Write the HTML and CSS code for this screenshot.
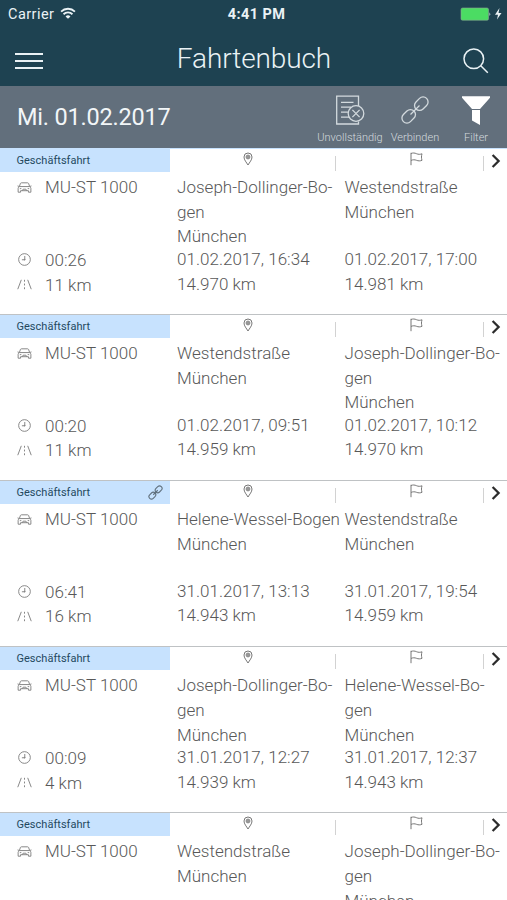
FILE: index.html
```
<!DOCTYPE html>
<html lang="de">
<head>
<meta charset="utf-8">
<title>Fahrtenbuch</title>
<link rel="stylesheet" href="styles.css">
</head>
<body>
<svg class="defs" aria-hidden="true">
  <symbol id="pin" viewBox="0 0 10 14"><path d="M5 13C3.500 10.400 1 8 1 5a4 4 0 0 1 8 0c0 3-2.500 5.400-4 8z"/><circle cx="5" cy="5" r="1.900"/><path d="M5 4v2M4 5h2"/></symbol>
  <symbol id="flag" viewBox="0 0 13 14"><path d="M1 .8v12.400M1 1.500c2-.8 3.700-.6 5.500.2s3.700.8 5.500.1c-.7 2.200-.7 4.300 0 6.500-1.800.8-3.700.7-5.500 0S3 7.600 1 8.400"/></symbol>
  <symbol id="car" viewBox="0 0 16 13"><path d="M2.500 5.500 3.600 2.300q.3-.8 1.100-.8h6.600q.8 0 1.100.8l1.100 3.200M.6 4.800l1.900.7h11l1.900-.7M2.500 5.500Q1.200 6.200 1.200 7.500v4h2.600V9.900h8.400v1.600h2.600v-4q0-1.300-1.300-2M3 7.700h1.600M11.400 7.700H13M5.600 9.900l.9-1.600h3l.9 1.600"/></symbol>
  <symbol id="clock" viewBox="0 0 14 14"><circle cx="7" cy="7" r="6.300"/><path d="M7.300 3.200v4.100H4.200"/><circle cx="7.200" cy="7.200" r=".5"/></symbol>
  <symbol id="road" viewBox="0 0 16 12"><path d="M4.600 1 .8 11M11.400 1l3.800 10M8 1v2M8 5v2M8 9v2"/></symbol>
  <symbol id="link" viewBox="0 0 30 30"><rect x="-7.500" y="-5" width="15" height="10" rx="5" transform="translate(21.300 8.700) rotate(-45)"/><rect x="-7.500" y="-5" width="15" height="10" rx="5" transform="translate(8.700 21.300) rotate(-45)"/><path d="M10.500 19.500l9-9"/></symbol>
  <symbol id="chevron" viewBox="0 0 10 14"><path d="M1.600 1 7.600 7l-6 6"/></symbol>
</svg>

<div class="screen">
  <header class="top">
    <div class="status">
      <div class="carrier">Carrier
        <svg class="wifi" viewBox="0 0 15 12"><path d="M1 4.200a9.300 9.300 0 0 1 13 0M3.300 6.700a6 6 0 0 1 8.400 0"/><path class="solid" d="M7.500 11 5.200 8.700a3.300 3.300 0 0 1 4.600 0z"/></svg>
      </div>
      <div class="time">4:41 PM</div>
      <div class="power">
        <svg viewBox="0 0 42 14"><rect class="battery" x="1" y="1" width="27.500" height="12.200" rx="1.500"/><path class="solid" d="M29.500 5.200q1.800 1.900 0 3.800zM39.500 1 35 7.700h3l-1 4.700 4.500-6.500h-3z"/></svg>
      </div>
    </div>
    <div class="nav">
      <svg class="menu" viewBox="0 0 30 18"><path d="M1 2h28M1 9h28M1 16h28"/></svg>
      <h1>Fahrtenbuch</h1>
      <svg class="search" viewBox="0 0 26 26"><circle cx="10.800" cy="10.800" r="9.800"/><path d="m17.800 17.800 7 7"/></svg>
    </div>
  </header>

  <section class="toolbar">
    <h2>Mi. 01.02.2017</h2>
    <div class="tool incomplete">
      <svg viewBox="0 0 30 30"><path d="M23.500 11V1.200H1.700V29h21.800v-2.500M6 7.300h12.500M6 12.200h10M6 17.200h7M6 22.200h8"/><circle cx="21" cy="18.500" r="7.800"/><path d="m17.400 14.900 7.200 7.200M24.600 14.900l-7.200 7.200"/></svg>
      <span>Unvollständig</span>
    </div>
    <div class="tool connect">
      <svg viewBox="0 0 30 30"><use href="#link"/></svg>
      <span>Verbinden</span>
    </div>
    <div class="tool filter">
      <svg viewBox="0 0 30 30"><path class="solid" d="M1 1.200h28v1.500L19 14H11L1 2.700zM11 15h8V30l-8-4.500z"/></svg>
      <span>Filter</span>
    </div>
  </section>

  <main class="trips">
    <article class="trip">
      <div class="kind">Geschäftsfahrt</div>
      <div class="head start"><svg class="pin"><use href="#pin"/></svg></div>
      <div class="head end"><svg class="flag"><use href="#flag"/></svg></div>
      <svg class="chevron"><use href="#chevron"/></svg>
      <div class="cell car"><div class="place"><svg><use href="#car"/></svg>MU-ST 1000</div><div class="fact"><svg><use href="#clock"/></svg>00:26</div><div class="fact"><svg><use href="#road"/></svg>11 km</div></div>
      <div class="cell"><div class="place">Joseph-Dollinger-Bo-<br>gen<br>München</div><div class="fact">01.02.2017, 16:34</div><div class="fact">14.970 km</div></div>
      <div class="cell"><div class="place">Westendstraße<br>München</div><div class="fact">01.02.2017, 17:00</div><div class="fact">14.981 km</div></div>
    </article>
    <article class="trip">
      <div class="kind">Geschäftsfahrt</div>
      <div class="head start"><svg class="pin"><use href="#pin"/></svg></div>
      <div class="head end"><svg class="flag"><use href="#flag"/></svg></div>
      <svg class="chevron"><use href="#chevron"/></svg>
      <div class="cell car"><div class="place"><svg><use href="#car"/></svg>MU-ST 1000</div><div class="fact"><svg><use href="#clock"/></svg>00:20</div><div class="fact"><svg><use href="#road"/></svg>11 km</div></div>
      <div class="cell"><div class="place">Westendstraße<br>München</div><div class="fact">01.02.2017, 09:51</div><div class="fact">14.959 km</div></div>
      <div class="cell"><div class="place">Joseph-Dollinger-Bo-<br>gen<br>München</div><div class="fact">01.02.2017, 10:12</div><div class="fact">14.970 km</div></div>
    </article>
    <article class="trip">
      <div class="kind">Geschäftsfahrt<svg><use href="#link"/></svg></div>
      <div class="head start"><svg class="pin"><use href="#pin"/></svg></div>
      <div class="head end"><svg class="flag"><use href="#flag"/></svg></div>
      <svg class="chevron"><use href="#chevron"/></svg>
      <div class="cell car"><div class="place"><svg><use href="#car"/></svg>MU-ST 1000</div><div class="fact"><svg><use href="#clock"/></svg>06:41</div><div class="fact"><svg><use href="#road"/></svg>16 km</div></div>
      <div class="cell"><div class="place">Helene-Wessel-Bogen<br>München</div><div class="fact">31.01.2017, 13:13</div><div class="fact">14.943 km</div></div>
      <div class="cell"><div class="place">Westendstraße<br>München</div><div class="fact">31.01.2017, 19:54</div><div class="fact">14.959 km</div></div>
    </article>
    <article class="trip">
      <div class="kind">Geschäftsfahrt</div>
      <div class="head start"><svg class="pin"><use href="#pin"/></svg></div>
      <div class="head end"><svg class="flag"><use href="#flag"/></svg></div>
      <svg class="chevron"><use href="#chevron"/></svg>
      <div class="cell car"><div class="place"><svg><use href="#car"/></svg>MU-ST 1000</div><div class="fact"><svg><use href="#clock"/></svg>00:09</div><div class="fact"><svg><use href="#road"/></svg>4 km</div></div>
      <div class="cell"><div class="place">Joseph-Dollinger-Bo-<br>gen<br>München</div><div class="fact">31.01.2017, 12:27</div><div class="fact">14.939 km</div></div>
      <div class="cell"><div class="place">Helene-Wessel-Bo-<br>gen<br>München</div><div class="fact">31.01.2017, 12:37</div><div class="fact">14.943 km</div></div>
    </article>
    <article class="trip">
      <div class="kind">Geschäftsfahrt</div>
      <div class="head start"><svg class="pin"><use href="#pin"/></svg></div>
      <div class="head end"><svg class="flag"><use href="#flag"/></svg></div>
      <svg class="chevron"><use href="#chevron"/></svg>
      <div class="cell car"><div class="place"><svg><use href="#car"/></svg>MU-ST 1000</div></div>
      <div class="cell"><div class="place">Westendstraße<br>München</div></div>
      <div class="cell"><div class="place">Joseph-Dollinger-Bo-<br>gen<br>München</div></div>
    </article>
  </main>
</div>
</body>
</html>
```

FILE: styles.css
```
* { box-sizing: border-box; }
body { margin: 0; font-family: Roboto, "Liberation Sans", sans-serif; font-weight: 300; color: #585858; background: #fff; }
svg { display: block; fill: none; stroke: currentColor; flex: none; }
.defs { position: absolute; width: 0; height: 0; }
.solid { fill: currentColor; stroke: none; }
.screen { width: 507px; height: 900px; overflow: hidden; display: flex; flex-direction: column; }

.top { height: 86px; flex: none; background: #1e4251; color: #eaf2f5; }
.status { height: 28px; display: grid; grid-template-columns: 1fr auto 1fr; align-items: center; padding: 0 5px 0 8px; font-size: 14.500px; font-weight: 400; letter-spacing: .45px; }
.carrier { display: flex; align-items: center; gap: 6px; }
.wifi { width: 16px; height: 13px; stroke-width: 1.700; margin-top: -1px; }
.time { font-weight: 700; letter-spacing: .4px; padding-left: 3px; }
.power { justify-self: end; }
.power svg { width: 42px; height: 14px; margin-top: -1px; }
.battery { fill: #4bdc63; stroke: #8aa894; stroke-width: .6; }
.nav { display: grid; grid-template-columns: 1fr auto 1fr; align-items: center; height: 62px; padding: 0 18px 0 14px; }
.menu { width: 30px; height: 18px; stroke-width: 2; margin-top: 4px; }
.search { width: 26px; height: 26px; stroke-width: 1.500; justify-self: end; margin-top: 4px; }
h1 { margin: 0; padding-left: 5px; font-size: 28px; font-weight: 300; letter-spacing: -.1px; line-height: 34px; }

.toolbar { height: 62px; flex: none; display: flex; background: #626f7c; color: #f2f6f8; }
h2 { margin: 0; width: 315px; padding-left: 17px; font-size: 23.500px; font-weight: 400; letter-spacing: -.2px; line-height: 63px; }
.tool { display: flex; flex-direction: column; align-items: center; padding-top: 9px; font-size: 11px; color: #d3dade; }
.tool svg { width: 30px; height: 30px; stroke-width: 1.300; }
.tool span { margin-top: 6px; line-height: 13px; white-space: nowrap; }
.incomplete { width: 70px; }
.connect { width: 60px; }
.filter { width: 62px; }
.filter svg { color: #fff; }

.trips { flex: 1; overflow: hidden; }
.trip { height: 166.200px; display: grid; grid-template-columns: 169.500px 167.500px 148px 22px; grid-template-rows: 23px 142px; border-top: 1px solid #bfc2c4; }
.trip:first-child { border-top-color: #c7e2fe; height: 165.800px; }
.kind { display: flex; align-items: center; justify-content: space-between; padding: 0 7px 0 16.500px; background: #c7e2fe; color: #24495f; font-size: 11px; font-weight: 400; letter-spacing: .02px; }
.kind svg { width: 15px; height: 15px; stroke-width: 2.200; color: #61717e; }
.head { display: flex; justify-content: center; align-items: flex-start; padding-top: 3px; background: linear-gradient(#d2d2d2, #d2d2d2) right 1px bottom 1px / 1px 15px no-repeat; color: #777; }
.start { padding-right: 11px; }
.end { padding-left: 10px; }
.pin { width: 10px; height: 14px; }
.flag { width: 13px; height: 14px; }
.chevron { width: 10px; height: 14px; align-self: end; margin: 0 0 4px 6px; color: #2c2c2c; stroke-width: 2.300; }
.cell { padding: 3px 0 0 7.500px; font-size: 17px; letter-spacing: .02px; white-space: nowrap; }
.cell:last-child { grid-column: 3 / 5; }
.car { padding: 3px 0 0 17px; }
.place { height: 72px; line-height: 24.700px; }
.fact { line-height: 24.500px; height: 24.500px; }
.car .place { display: flex; height: 73px; }
.car .place svg { margin-top: 6px; height: 13px; }
.car .fact { display: flex; align-items: center; }
.car svg { width: 15px; height: 13px; margin-right: 13px; color: #808080; }
.car .fact svg { margin-top: -1px; }
```
